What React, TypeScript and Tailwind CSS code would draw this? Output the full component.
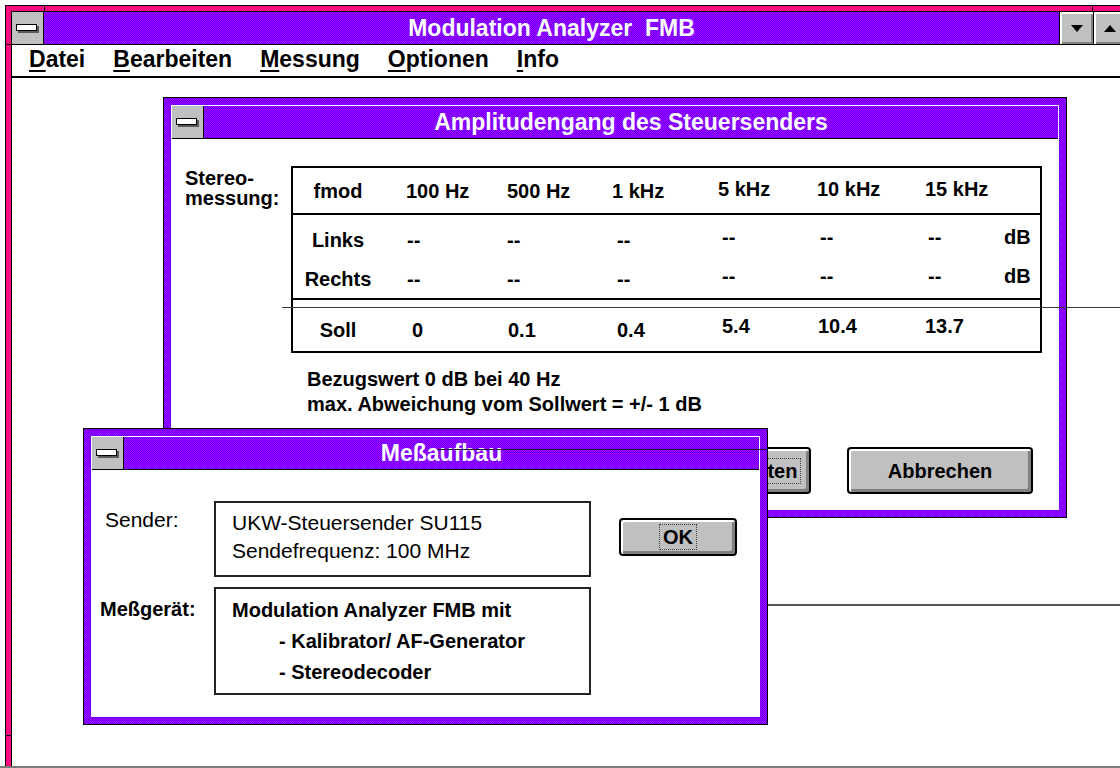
import React from "react";

// Dithered colours of the old 16-colour palette
const PURPLE =
  "bg-[conic-gradient(#6400ff_25%,#a800ff_0_50%,#6400ff_0_75%,#a800ff_0)] bg-[length:2px_2px]";
const PINK =
  "bg-[conic-gradient(#ff0048_25%,#ff18b8_0_50%,#ff0048_0_75%,#ff18b8_0)] bg-[length:2px_2px]";

function SysMenuBox() {
  return (
    <div className="w-[32px] shrink-0 bg-[#c0c0c0] border-r border-black flex items-center justify-center">
      <div className="w-[21px] h-[7px] border-[1.5px] border-black bg-white shadow-[2px_2px_0_#5a5a5a] -mt-[2px] -ml-[2px]" />
    </div>
  );
}

function Button({
  children,
  className,
  focus,
}: {
  children: React.ReactNode;
  className: string;
  focus?: boolean;
}) {
  return (
    <div
      className={`shrink-0 border-2 border-black rounded-[4px] bg-[#c0c0c0] shadow-[inset_2px_2px_0_#ffffff,inset_-3px_-3px_0_#808080] flex items-center justify-center text-[20px] leading-[20px] font-bold text-black ${className}`}
    >
      {focus ? (
        <span className="border border-dotted border-[#404040] px-[3px] py-[2px]">{children}</span>
      ) : (
        <span>{children}</span>
      )}
    </div>
  );
}

function Dialog({
  title,
  className,
  children,
}: {
  title: string;
  className: string;
  children: React.ReactNode;
}) {
  return (
    <div className={`absolute border border-black p-[7px] ${PURPLE} ${className}`}>
      <div className="h-full flex flex-col border border-white bg-white">
        <div className={`h-[33px] shrink-0 flex border-b border-black ${PURPLE}`}>
          <SysMenuBox />
          <div className="flex-1 flex items-center justify-center text-white text-[23px] leading-none font-bold">
            {title}
          </div>
        </div>
        <div className="flex-1 text-black">{children}</div>
      </div>
    </div>
  );
}

type Cell = { t: string; c?: string };

const COLS = "grid grid-cols-[113px_101px_105px_106px_99px_108px_79px_1fr] items-center";

function Row({ cells, className }: { cells: Cell[]; className: string }) {
  return (
    <div className={`${COLS} ${className}`}>
      {cells.map((cell, i) => (
        <div key={i} className={`whitespace-nowrap ${i === 0 ? "pr-[23px] text-center" : ""} ${cell.c ?? ""}`}>
          {cell.t}
        </div>
      ))}
    </div>
  );
}

const header: Cell[] = [
  { t: "fmod" },
  { t: "100 Hz" },
  { t: "500 Hz" },
  { t: "1 kHz" },
  { t: "5 kHz", c: "-translate-y-[2px]" },
  { t: "10 kHz", c: "-translate-y-[2px]" },
  { t: "15 kHz", c: "-translate-y-[2px]" },
  { t: "" },
];

const measured = (label: string): Cell[] => [
  { t: label },
  { t: "--", c: "pl-[1px]" },
  { t: "--" },
  { t: "--", c: "pl-[5px]" },
  { t: "--", c: "pl-[4px] -translate-y-[3px]" },
  { t: "--", c: "pl-[3px] -translate-y-[3px]" },
  { t: "--", c: "pl-[3px] -translate-y-[3px]" },
  { t: "dB", c: "-translate-y-[3px]" },
];

const target: Cell[] = [
  { t: "Soll", c: "translate-y-[3px]" },
  { t: "0", c: "pl-[6px] translate-y-[3px]" },
  { t: "0.1", c: "pl-[1px] translate-y-[3px]" },
  { t: "0.4", c: "pl-[5px] translate-y-[3px]" },
  { t: "5.4", c: "pl-[4px] -translate-y-[1px]" },
  { t: "10.4", c: "pl-[1px] -translate-y-[1px]" },
  { t: "13.7", c: "-translate-y-[1px]" },
  { t: "" },
];

const menu = ["Datei", "Bearbeiten", "Messung", "Optionen", "Info"];

export default function App() {
  return (
    <div className="relative w-[1120px] h-[768px] overflow-hidden bg-white font-['Liberation_Sans',Arial,sans-serif]">
      {/* Application window */}
      <div className={`absolute left-[5px] top-[5px] w-[1128px] h-[800px] border border-black p-[5px] ${PINK}`}>
        <div className="absolute left-[38px] top-0 w-px h-[5px] bg-black" />
        <div className="absolute left-[1086px] top-0 w-px h-[5px] bg-black" />
        <div className="absolute left-0 top-[38px] w-[5px] h-px bg-black" />
        <div className="absolute left-0 top-[729px] w-[5px] h-px bg-black" />
        <div className="h-full flex flex-col border border-black bg-white">
          <div className={`h-[33px] shrink-0 flex border-b border-black ${PURPLE}`}>
            <SysMenuBox />
            <div className="flex-1 flex items-center justify-center text-white text-[23px] leading-none font-bold whitespace-pre">
              {"Modulation Analyzer  FMB"}
            </div>
            <div className="w-[34px] shrink-0 border-l border-black bg-[#c0c0c0] shadow-[inset_2px_2px_0_#ffffff,inset_-2px_-2px_0_#808080] flex items-center justify-center">
              <div className="w-0 h-0 border-x-[6px] border-x-transparent border-t-[7px] border-t-black" />
            </div>
            <div className="w-[33px] shrink-0 border-l border-black bg-[#c0c0c0] shadow-[inset_2px_2px_0_#ffffff,inset_-2px_-2px_0_#808080] flex items-center justify-center">
              <div className="w-0 h-0 border-x-[6px] border-x-transparent border-b-[7px] border-b-black" />
            </div>
          </div>
          <div className="h-[33px] shrink-0 border-b-2 border-black flex items-center pl-[3px] pb-[3px] text-[23px] leading-none font-bold text-black">
            {menu.map((m) => (
              <div key={m} className="px-[14px]">
                <span className="underline decoration-2 underline-offset-[3px]">{m[0]}</span>
                {m.slice(1)}
              </div>
            ))}
          </div>
          <div className="flex-1" />
        </div>
      </div>

      {/* Frequency response dialog */}
      <Dialog title="Amplitudengang des Steuersenders" className="left-[163px] top-[97px] w-[904px] h-[421px]">
        <div className="pt-[27px] pl-[13px] flex flex-col">
          <div className="flex items-start">
            <div className="w-[106px] pt-[2px] text-[20px] leading-[20px] font-bold">
              Stereo-
              <br />
              messung:
            </div>
            <div className="w-[751px] border-2 border-black text-[20px] leading-[20px] font-bold">
              <Row cells={header} className="h-[47px] border-b-2 border-black" />
              <div className="h-[85px] border-b-2 border-black pt-[5px]">
                <Row cells={measured("Links")} className="h-[39px]" />
                <Row cells={measured("Rechts")} className="h-[39px]" />
              </div>
              <Row cells={target} className="h-[51px] pt-[2px]" />
            </div>
          </div>
          <div className="mt-[14px] pl-[122px] text-[20px] leading-[25px] font-bold">
            <div>Bezugswert 0 dB bei 40 Hz</div>
            <div>max. Abweichung vom Sollwert = +/- 1 dB</div>
          </div>
          <div className="mt-[30px] flex justify-end gap-[36px] pr-[25px]">
            <Button className="w-[186px] h-[47px]" focus>
              Messung starten
            </Button>
            <Button className="w-[186px] h-[47px]">Abbrechen</Button>
          </div>
        </div>
      </Dialog>

      {/* Measurement setup dialog */}
      <Dialog title="Meßaufbau" className="left-[83px] top-[428px] w-[685px] h-[297px]">
        <div className="pt-[31px] flex flex-col gap-[10px]">
          <div className="flex items-start">
            <div className="w-[122px] shrink-0 pl-[13px] pt-[5px] text-[21px] leading-[28px] font-normal">
              Sender:
            </div>
            <div className="w-[377px] h-[76px] shrink-0 border-2 border-[#222] pt-[6px] pl-[16px] text-[21px] leading-[28px] font-normal">
              <div>UKW-Steuersender SU115</div>
              <div>Sendefrequenz: 100 MHz</div>
            </div>
            <Button className="ml-[28px] mt-[17px] w-[118px] h-[38px]" focus>
              OK
            </Button>
          </div>
          <div className="flex items-start">
            <div className="w-[122px] shrink-0 pl-[8px] pt-[10px] text-[20px] leading-[24px] font-bold">
              Meßgerät:
            </div>
            <div className="w-[377px] h-[108px] shrink-0 border-2 border-[#222] pt-[6px] pl-[16px] text-[20px] leading-[31px] font-bold">
              <div>Modulation Analyzer FMB mit</div>
              <div className="pl-[47px]">- Kalibrator/ AF-Generator</div>
              <div className="pl-[47px]">- Stereodecoder</div>
            </div>
          </div>
        </div>
      </Dialog>

      {/* Leftover screen lines */}
      <div className="absolute left-[282px] right-0 top-[307px] h-px bg-[#3a3a3a]" />
      <div className="absolute left-[437px] w-[330px] top-[449px] h-px bg-[#1a1030]" />
      <div className="absolute left-[768px] right-0 top-[604px] h-[2px] bg-[#555555]" />
      <div className="absolute left-0 right-0 top-[766px] h-[2px] bg-[#7a7a7a]" />
    </div>
  );
}
